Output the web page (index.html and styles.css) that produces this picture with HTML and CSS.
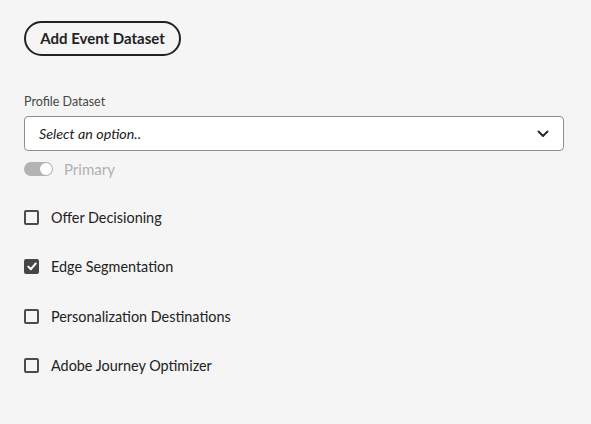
FILE: index.html
```html
<!DOCTYPE html>
<html>
<head>
<meta charset="utf-8">
<link rel="stylesheet" href="styles.css">
</head>
<body>
<div class="page">
  <button class="btn">Add Event Dataset</button>
  <div class="field">
    <label class="label">Profile Dataset</label>
    <div class="select">
      <span class="placeholder">Select an option..</span>
      <svg class="chev" width="12" height="8" viewBox="0 0 12 8"><path d="M1.5 1.5 L6 6 L10.5 1.5" fill="none" stroke="#2c2c2c" stroke-width="2" stroke-linecap="round" stroke-linejoin="round"/></svg>
    </div>
    <div class="toggle-row">
      <span class="toggle"><span class="knob"></span></span>
      <span class="toggle-label">Primary</span>
    </div>
  </div>
  <div class="checks">
    <div class="check-row"><span class="box"></span><span class="ctext">Offer Decisioning</span></div>
    <div class="check-row"><span class="box checked"><svg width="10" height="9" viewBox="0 0 10 9"><path d="M1.3 4.6 L3.9 7.2 L8.7 1.5" fill="none" stroke="#fff" stroke-width="2" stroke-linecap="round" stroke-linejoin="round"/></svg></span><span class="ctext">Edge Segmentation</span></div>
    <div class="check-row"><span class="box"></span><span class="ctext">Personalization Destinations</span></div>
    <div class="check-row"><span class="box"></span><span class="ctext">Adobe Journey Optimizer</span></div>
  </div>
</div>
</body>
</html>
```
FILE: styles.css
```css
html, body {
  margin: 0;
  background: #f5f5f5;
  font-family: Lato, "Open Sans", sans-serif;
  color: #2c2c2c;
}
.page {
  display: flex;
  flex-direction: column;
  align-items: flex-start;
  padding: 21px 27px 0 24px;
}
.btn {
  height: 35px;
  width: 157px;
  border: 2px solid #222;
  border-radius: 18px;
  background: transparent;
  font-family: inherit;
  font-weight: 700;
  font-size: 15px;
  color: #222;
  padding: 0;
  line-height: 1;
}
.field {
  align-self: stretch;
  display: flex;
  flex-direction: column;
  margin-top: 38px;
}
.label {
  font-size: 12.5px;
  color: #464646;
  line-height: 16px;
  margin-bottom: 6px;
}
.select {
  height: 35px;
  box-sizing: border-box;
  border: 1px solid #8e8e8e;
  border-radius: 4px;
  background: #fff;
  display: flex;
  align-items: center;
  justify-content: space-between;
  padding: 0 14px 0 14px;
}
.placeholder {
  font-style: italic;
  font-size: 14.3px;
  color: #222;
}
.chev { display: block; margin-top: 1px; }
.toggle-row {
  display: flex;
  align-items: center;
  margin-top: 10px;
  height: 16px;
}
.toggle {
  width: 29px;
  height: 14px;
  border-radius: 7px;
  background: #b3b3b3;
  position: relative;
  display: block;
}
.knob {
  position: absolute;
  right: 1px;
  top: 1px;
  width: 12px;
  height: 12px;
  border-radius: 50%;
  background: #fff;
}
.toggle-label {
  margin-left: 11px;
  font-size: 15px;
  color: #b1b1b1;
}
.checks {
  display: flex;
  flex-direction: column;
  gap: 29.6px;
  margin-top: 30px;
}
.check-row {
  display: flex;
  align-items: center;
  height: 20px;
}
.box {
  width: 15px;
  height: 15px;
  box-sizing: border-box;
  border: 2px solid #4b4b4b;
  border-radius: 2px;
  display: flex;
  align-items: center;
  justify-content: center;
}
.box.checked {
  background: #464646;
  border-color: #464646;
}
.box svg { display: block; }
.ctext {
  margin-left: 12px;
  font-size: 14.4px;
  color: #222;
}
```
